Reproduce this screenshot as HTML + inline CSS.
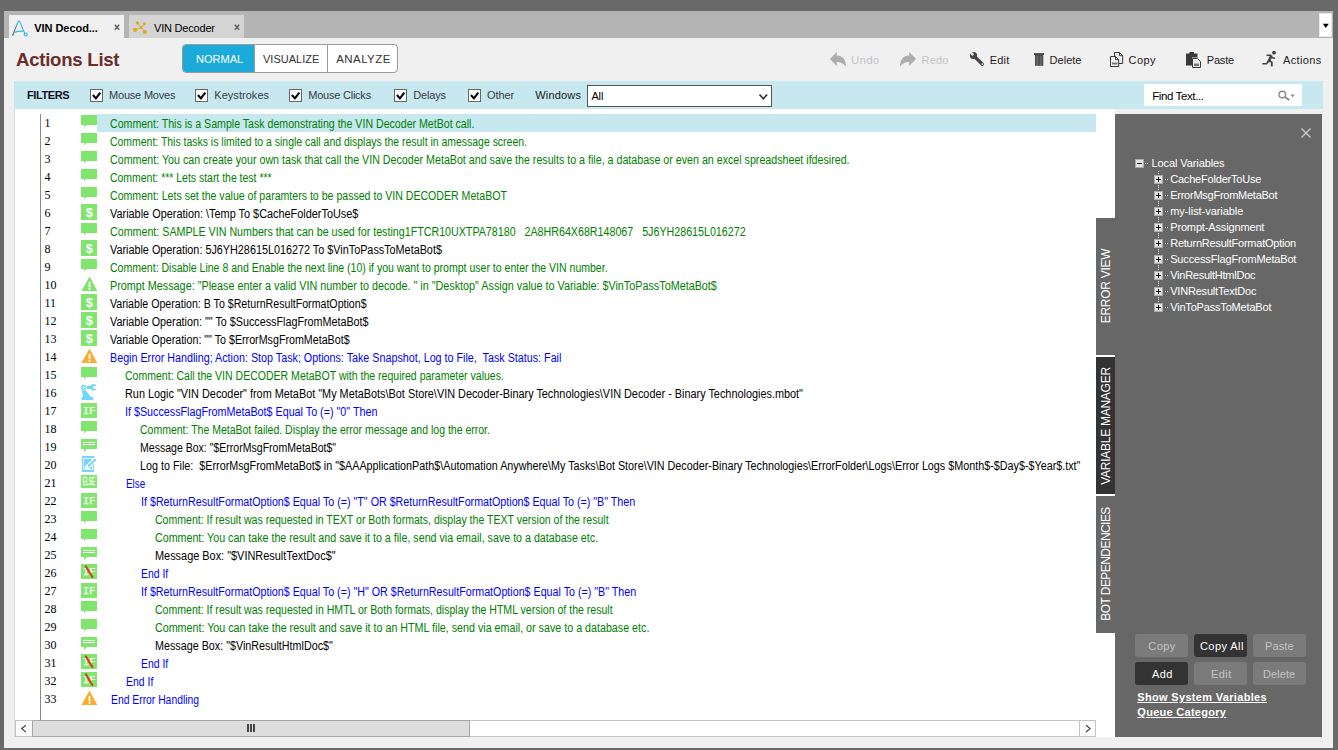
<!DOCTYPE html>
<html><head><meta charset="utf-8"><title>VIN Decoder</title>
<style>
*{box-sizing:border-box;margin:0;padding:0}
html,body{width:1338px;height:750px;overflow:hidden;background:#696969;font-family:"Liberation Sans",sans-serif;}
#app{position:absolute;left:0;top:0;width:1338px;height:750px;background:#696969;overflow:hidden}
#app div,#app svg,#app span{position:absolute}
.x{white-space:pre;left:0;top:0}
.ic{left:81px}
.n{left:44.5px;font-family:"Liberation Serif",serif;font-size:12px;line-height:18px;color:#000;white-space:pre}
.cb{width:13px;height:13px;top:89px;background:#fff;border:1px solid #666}
.btn{height:23px;border-radius:3px}
.vt{writing-mode:vertical-rl}
</style></head><body><div id="app">

<div style="left:4px;top:11px;width:1329px;height:27px;background:#b4b4b4"></div>
<div style="left:4px;top:38px;width:1329px;height:710px;background:#f0f0f0"></div>
<div style="left:9px;top:15px;width:115px;height:23px;background:#f0f0f0"></div>
<div style="left:129px;top:15px;width:115px;height:23px;background:#d4d4d4"></div>
<svg style="left:11px;top:18px" width="18" height="20" viewBox="0 0 18 20"><linearGradient id="ag" x1="0" y1="1" x2="0" y2="0"><stop offset="0" stop-color="#4a4a4a"/><stop offset="0.550" stop-color="#4c86a8"/><stop offset="1" stop-color="#3ab4e8"/></linearGradient><path d="M1.600 17.600L6.900 4.100" stroke="url(#ag)" stroke-width="1.150" fill="none"/><path d="M6.900 4.100Q8 1.500 9.100 4.100L12.900 13.600L13.800 15.300" stroke="#3ab4e8" stroke-width="1.150" fill="none"/><path d="M3.500 14.400C6 13 9 13 12.400 13.100" stroke="#3ab4e8" stroke-width="1.200" fill="none"/><circle cx="14.750" cy="16.500" r="1.500" stroke="#3ab4e8" stroke-width="1.200" fill="none"/></svg>
<svg style="left:131px;top:19px" width="18" height="18" viewBox="0 0 18 18"><g stroke="#e2a722" stroke-width="1"><path d="M6.4 4.1L10.2 8.4M13.4 4.8L10.2 8.4M4.1 10.9L10.2 8.4M13.8 13L10.2 8.4"/></g><g fill="#e2a722"><rect x="4.900" y="2.600" width="3" height="3" rx="0.800"/><circle cx="13.400" cy="4.800" r="1.500"/><circle cx="4.100" cy="10.900" r="2.100"/><circle cx="13.800" cy="13" r="2.100"/><circle cx="10.200" cy="8.400" r="1.300"/></g></svg>
<svg style="left:112.8px;top:23px" width="8" height="8" viewBox="0 0 8 8"><path d="M1.800 1.700L6.200 6.700M6.200 1.700L1.800 6.700" stroke="#606060" stroke-width="1.500"/></svg>
<svg style="left:232.8px;top:23px" width="8" height="8" viewBox="0 0 8 8"><path d="M1.800 1.700L6.200 6.700M6.200 1.700L1.800 6.700" stroke="#606060" stroke-width="1.500"/></svg>
<div style="left:1319px;top:13px;width:13px;height:24px;background:#fff;border:1px solid #e8e8e8"></div>
<svg style="left:1322px;top:23px" width="8" height="6" viewBox="0 0 8 6"><path d="M0.8 0.8h6L3.8 5z" fill="#000"/></svg>
<div style="left:182px;top:44px;width:216px;height:29px;background:#fff;border:1px solid #9a9a9a;border-radius:4px;overflow:hidden"><div style="left:0;top:0;width:71px;height:27px;background:#1aabdb"></div><div style="left:71px;top:0;width:1px;height:27px;background:#9a9a9a"></div><div style="left:144px;top:0;width:1px;height:27px;background:#9a9a9a"></div></div>
<svg style="left:829px;top:51px" width="18" height="17" viewBox="0 0 18 17"><path d="M7.8 1L0.9 7.9L7.8 15V11C12 11 15 12.5 16.9 15.8C17.3 9 13.5 4.5 7.8 4.5Z" fill="#adadad"/></svg>
<svg style="left:899px;top:51px" width="18" height="17" viewBox="0 0 18 17"><path d="M10.2 1L17.1 7.9L10.2 15V11C6 11 3 12.5 1.100 15.800C0.700 9 4.500 4.500 10.200 4.500Z" fill="#adadad"/></svg>
<svg style="left:969px;top:51px" width="17" height="17" viewBox="0 0 17 17"><path d="M5.500 5.500L13.400 13.200" stroke="#454545" stroke-width="3.300" stroke-linecap="round"/><circle cx="4.500" cy="4.500" r="3.600" fill="#454545"/><rect x="-1.200" y="-5.200" width="2.400" height="4.800" transform="translate(4.500 4.500) rotate(-45)" fill="#f0f0f0"/><circle cx="13.400" cy="13.200" r="0.900" fill="#f0f0f0"/></svg>
<svg style="left:1033px;top:52px" width="12" height="15" viewBox="0 0 12 15"><path d="M1 1.100h10.100v1.900H1z" fill="#4a4a4a"/><path d="M2 3h8.300v10.800H2z" fill="#505050"/><path d="M4.300 4v9M7.900 4v9" stroke="#7c7c7c" stroke-width="0.900"/></svg>
<svg style="left:1109px;top:51px" width="16" height="17" viewBox="0 0 16 17"><path d="M5.500 1.500h5l3.200 3.200v7.800h-8.200z" fill="#f0f0f0" stroke="#3a3a3a" stroke-width="1"/><path d="M10.500 1.500v3.200h3.200" fill="none" stroke="#3a3a3a" stroke-width="1"/><path d="M1.500 5.500h5l3.200 3.200v6.800h-8.200z" fill="#f0f0f0" stroke="#3a3a3a" stroke-width="1"/><path d="M6.500 5.500v3.200h3.200" fill="none" stroke="#3a3a3a" stroke-width="1"/><path d="M3 11.500h5.500v2H3z" fill="#777"/></svg>
<svg style="left:1185px;top:51px" width="17" height="18" viewBox="0 0 17 18"><path d="M1 2.500h3.500v-1.500h4.500v1.500h3.500v4h-5.500v8h-6z" fill="#3a3a3a"/><path d="M7.500 7.500h5l3 3v6h-8z" fill="#f0f0f0" stroke="#3a3a3a" stroke-width="1"/><path d="M9 12.500h5v2.500h-5z" fill="#777"/></svg>
<svg style="left:1261px;top:50px" width="17" height="18" viewBox="0 0 17 18"><circle cx="13" cy="2.700" r="1.900" fill="#444"/><g fill="none" stroke="#444" stroke-linejoin="round"><path d="M5.500 5.300H10.300" stroke-width="1.600"/><path d="M10.600 5.300L7.200 12" stroke-width="2.600"/><path d="M7.300 11.500L5.600 13.800H1.300" stroke-width="1.600"/><path d="M8 10.300L10.800 12.300V16.600" stroke-width="1.800"/><path d="M10 7.600L14 8.300" stroke-width="1.500"/></g></svg>
<div style="left:14px;top:81px;width:1309px;height:28px;background:#c8e8f0"></div>
<div class="cb" style="left:90px"><svg style="left:0;top:0" width="11" height="11" viewBox="0 0 11 11"><path d="M1.900 5.100L4.900 8.400L9.300 2.600" fill="none" stroke="#0a0a0a" stroke-width="2.200"/></svg></div>
<div class="cb" style="left:195px"><svg style="left:0;top:0" width="11" height="11" viewBox="0 0 11 11"><path d="M1.900 5.100L4.900 8.400L9.300 2.600" fill="none" stroke="#0a0a0a" stroke-width="2.200"/></svg></div>
<div class="cb" style="left:289px"><svg style="left:0;top:0" width="11" height="11" viewBox="0 0 11 11"><path d="M1.900 5.100L4.900 8.400L9.300 2.600" fill="none" stroke="#0a0a0a" stroke-width="2.200"/></svg></div>
<div class="cb" style="left:394px"><svg style="left:0;top:0" width="11" height="11" viewBox="0 0 11 11"><path d="M1.900 5.100L4.900 8.400L9.300 2.600" fill="none" stroke="#0a0a0a" stroke-width="2.200"/></svg></div>
<div class="cb" style="left:468px"><svg style="left:0;top:0" width="11" height="11" viewBox="0 0 11 11"><path d="M1.900 5.100L4.900 8.400L9.300 2.600" fill="none" stroke="#0a0a0a" stroke-width="2.200"/></svg></div>
<div style="left:587px;top:85px;width:185px;height:22px;background:#fff;border:1px solid #555"></div>
<svg style="left:758px;top:93px" width="11" height="8" viewBox="0 0 11 8"><path d="M1.500 1.500L5.300 5.800L9.100 1.500" fill="none" stroke="#333" stroke-width="1.700"/></svg>
<div style="left:1144px;top:84px;width:158px;height:22px;background:#fff"></div>
<svg style="left:1277px;top:88px" width="20" height="14" viewBox="0 0 20 14"><circle cx="5.300" cy="6.500" r="3.300" fill="none" stroke="#8c8c8c" stroke-width="1.400"/><path d="M7.800 9L12.300 12" stroke="#8c8c8c" stroke-width="1.800"/><path d="M13.300 6.600h4.500l-2.250 2.600z" fill="#8c8c8c"/></svg>
<div style="left:14px;top:109px;width:1101px;height:628px;background:#fff;border-left:1px solid #ddd"></div>
<div style="left:40px;top:114px;width:1px;height:606px;background:#8a8a8a"></div>
<div style="left:97px;top:114px;width:999px;height:18px;background:#c8e8f0"></div>
<span class="n" style="top:114px">1</span>
<svg class="ic" style="top:114px" width="17" height="18" viewBox="0 0 17 18"><path d="M0 1h16v10H5.2L3 13.2V11H0z" fill="#80e56c"/></svg>
<span class="n" style="top:132px">2</span>
<svg class="ic" style="top:132px" width="17" height="18" viewBox="0 0 17 18"><path d="M0 1h16v10H5.2L3 13.2V11H0z" fill="#80e56c"/></svg>
<span class="n" style="top:150px">3</span>
<svg class="ic" style="top:150px" width="17" height="18" viewBox="0 0 17 18"><path d="M0 1h16v10H5.2L3 13.2V11H0z" fill="#80e56c"/></svg>
<span class="n" style="top:168px">4</span>
<svg class="ic" style="top:168px" width="17" height="18" viewBox="0 0 17 18"><path d="M0 1h16v10H5.2L3 13.2V11H0z" fill="#80e56c"/></svg>
<span class="n" style="top:186px">5</span>
<svg class="ic" style="top:186px" width="17" height="18" viewBox="0 0 17 18"><path d="M0 1h16v10H5.2L3 13.2V11H0z" fill="#80e56c"/></svg>
<span class="n" style="top:204px">6</span>
<svg class="ic" style="top:204px" width="17" height="18" viewBox="0 0 17 18"><rect x="0" y="0" width="16" height="16" fill="#80e56c"/><text x="8.400" y="12.700" font-family="Liberation Sans,sans-serif" font-size="13" font-weight="bold" fill="#fff" text-anchor="middle">$</text></svg>
<span class="n" style="top:222px">7</span>
<svg class="ic" style="top:222px" width="17" height="18" viewBox="0 0 17 18"><path d="M0 1h16v10H5.2L3 13.2V11H0z" fill="#80e56c"/></svg>
<span class="n" style="top:240px">8</span>
<svg class="ic" style="top:240px" width="17" height="18" viewBox="0 0 17 18"><rect x="0" y="0" width="16" height="16" fill="#80e56c"/><text x="8.400" y="12.700" font-family="Liberation Sans,sans-serif" font-size="13" font-weight="bold" fill="#fff" text-anchor="middle">$</text></svg>
<span class="n" style="top:258px">9</span>
<svg class="ic" style="top:258px" width="17" height="18" viewBox="0 0 17 18"><path d="M0 1h16v10H5.2L3 13.2V11H0z" fill="#80e56c"/></svg>
<span class="n" style="top:276px">10</span>
<svg class="ic" style="top:276px" width="17" height="18" viewBox="0 0 17 18"><path d="M8.5 0.6L16.3 15H0.4z" fill="#80e56c"/><path d="M7.6 6h1.8v5.2H7.6zM7.6 12h1.8v1.8H7.6z" fill="#fff"/></svg>
<span class="n" style="top:294px">11</span>
<svg class="ic" style="top:294px" width="17" height="18" viewBox="0 0 17 18"><rect x="0" y="0" width="16" height="16" fill="#80e56c"/><text x="8.400" y="12.700" font-family="Liberation Sans,sans-serif" font-size="13" font-weight="bold" fill="#fff" text-anchor="middle">$</text></svg>
<span class="n" style="top:312px">12</span>
<svg class="ic" style="top:312px" width="17" height="18" viewBox="0 0 17 18"><rect x="0" y="0" width="16" height="16" fill="#80e56c"/><text x="8.400" y="12.700" font-family="Liberation Sans,sans-serif" font-size="13" font-weight="bold" fill="#fff" text-anchor="middle">$</text></svg>
<span class="n" style="top:330px">13</span>
<svg class="ic" style="top:330px" width="17" height="18" viewBox="0 0 17 18"><rect x="0" y="0" width="16" height="16" fill="#80e56c"/><text x="8.400" y="12.700" font-family="Liberation Sans,sans-serif" font-size="13" font-weight="bold" fill="#fff" text-anchor="middle">$</text></svg>
<span class="n" style="top:348px">14</span>
<svg class="ic" style="top:348px" width="17" height="18" viewBox="0 0 17 18"><path d="M8.5 0.6L16.3 15H0.4z" fill="#f9ae31"/><path d="M7.6 6h1.8v5.2H7.6zM7.6 12h1.8v1.8H7.6z" fill="#fff"/></svg>
<span class="n" style="top:366px">15</span>
<svg class="ic" style="top:366px" width="17" height="18" viewBox="0 0 17 18"><path d="M0 1h16v10H5.2L3 13.2V11H0z" fill="#80e56c"/></svg>
<span class="n" style="top:384px">16</span>
<svg class="ic" style="top:384px" width="17" height="18" viewBox="0 0 17 18"><g fill="#74d5fb"><path d="M2.5 0.700a2.700 2.700 0 1 0 0.010 0zM2.500 2.500a0.950 0.950 0 1 1 -0.010 0z" fill-rule="evenodd"/><rect x="6" y="1.6" width="5" height="3.4"/><path d="M10.5 0.3h3.6l1 0.8v0.9h-2.2l-0.7 0.9v1l0.7 0.9h2.2v0.9l-1 0.8h-3.6z"/><path d="M0.900 6.300h3.900l5.300 6.900H2z"/><rect x="0.6" y="13" width="11.6" height="3"/></g></svg>
<span class="n" style="top:402px">17</span>
<svg class="ic" style="top:402px" width="17" height="18" viewBox="0 0 17 18"><rect x="0" y="1" width="16" height="15" fill="#80e56c"/><text x="8.2" y="12" font-family="Liberation Mono,monospace" font-size="10.200" fill="#fff" stroke="#fff" stroke-width="0.250" text-anchor="middle">IF</text></svg>
<span class="n" style="top:420px">18</span>
<svg class="ic" style="top:420px" width="17" height="18" viewBox="0 0 17 18"><path d="M0 1h16v10H5.2L3 13.2V11H0z" fill="#80e56c"/></svg>
<span class="n" style="top:438px">19</span>
<svg class="ic" style="top:438px" width="17" height="18" viewBox="0 0 17 18"><path d="M0 1h16v10H6L3 14V11H0z" fill="#80e56c"/><path d="M2 4h12v1H2zM2 6h12v1H2z" fill="#fff"/></svg>
<span class="n" style="top:456px">20</span>
<svg class="ic" style="top:456px" width="17" height="18" viewBox="0 0 17 18"><rect x="1" y="0" width="12" height="16" fill="#74d5fb"/><rect x="2.300" y="2" width="9.700" height="11.800" fill="#fff"/><rect x="3" y="3" width="8" height="9.800" fill="#74d5fb"/><path d="M4.700 12.600L14.300 3.600" stroke="#fff" stroke-width="4.200"/><path d="M7 10.500L14.700 3.300" stroke="#74d5fb" stroke-width="2"/></svg>
<span class="n" style="top:474px">21</span>
<svg class="ic" style="top:474px" width="17" height="18" viewBox="0 0 17 18"><rect x="0" y="1" width="16" height="13" fill="#80e56c"/><text x="8" y="11.200" font-family="Liberation Sans,sans-serif" font-size="10" fill="#fff" stroke="#fff" stroke-width="0.350" text-anchor="middle" textLength="12.300" lengthAdjust="spacingAndGlyphs">ELSE</text></svg>
<span class="n" style="top:492px">22</span>
<svg class="ic" style="top:492px" width="17" height="18" viewBox="0 0 17 18"><rect x="0" y="1" width="16" height="15" fill="#80e56c"/><text x="8.2" y="12" font-family="Liberation Mono,monospace" font-size="10.200" fill="#fff" stroke="#fff" stroke-width="0.250" text-anchor="middle">IF</text></svg>
<span class="n" style="top:510px">23</span>
<svg class="ic" style="top:510px" width="17" height="18" viewBox="0 0 17 18"><path d="M0 1h16v10H5.2L3 13.2V11H0z" fill="#80e56c"/></svg>
<span class="n" style="top:528px">24</span>
<svg class="ic" style="top:528px" width="17" height="18" viewBox="0 0 17 18"><path d="M0 1h16v10H5.2L3 13.2V11H0z" fill="#80e56c"/></svg>
<span class="n" style="top:546px">25</span>
<svg class="ic" style="top:546px" width="17" height="18" viewBox="0 0 17 18"><path d="M0 1h16v10H6L3 14V11H0z" fill="#80e56c"/><path d="M2 4h12v1H2zM2 6h12v1H2z" fill="#fff"/></svg>
<span class="n" style="top:564px">26</span>
<svg class="ic" style="top:564px" width="17" height="18" viewBox="0 0 17 18"><rect x="0" y="0" width="16" height="15" fill="#80e56c"/><text x="8.2" y="11" font-family="Liberation Mono,monospace" font-size="10.200" fill="#fff" stroke="#fff" stroke-width="0.250" text-anchor="middle">IF</text><path d="M4.800 2.400L11.400 13" stroke="#e0351a" stroke-width="2" stroke-linecap="round"/></svg>
<span class="n" style="top:582px">27</span>
<svg class="ic" style="top:582px" width="17" height="18" viewBox="0 0 17 18"><rect x="0" y="1" width="16" height="15" fill="#80e56c"/><text x="8.2" y="12" font-family="Liberation Mono,monospace" font-size="10.200" fill="#fff" stroke="#fff" stroke-width="0.250" text-anchor="middle">IF</text></svg>
<span class="n" style="top:600px">28</span>
<svg class="ic" style="top:600px" width="17" height="18" viewBox="0 0 17 18"><path d="M0 1h16v10H5.2L3 13.2V11H0z" fill="#80e56c"/></svg>
<span class="n" style="top:618px">29</span>
<svg class="ic" style="top:618px" width="17" height="18" viewBox="0 0 17 18"><path d="M0 1h16v10H5.2L3 13.2V11H0z" fill="#80e56c"/></svg>
<span class="n" style="top:636px">30</span>
<svg class="ic" style="top:636px" width="17" height="18" viewBox="0 0 17 18"><path d="M0 1h16v10H6L3 14V11H0z" fill="#80e56c"/><path d="M2 4h12v1H2zM2 6h12v1H2z" fill="#fff"/></svg>
<span class="n" style="top:654px">31</span>
<svg class="ic" style="top:654px" width="17" height="18" viewBox="0 0 17 18"><rect x="0" y="0" width="16" height="15" fill="#80e56c"/><text x="8.2" y="11" font-family="Liberation Mono,monospace" font-size="10.200" fill="#fff" stroke="#fff" stroke-width="0.250" text-anchor="middle">IF</text><path d="M4.800 2.400L11.400 13" stroke="#e0351a" stroke-width="2" stroke-linecap="round"/></svg>
<span class="n" style="top:672px">32</span>
<svg class="ic" style="top:672px" width="17" height="18" viewBox="0 0 17 18"><rect x="0" y="0" width="16" height="15" fill="#80e56c"/><text x="8.2" y="11" font-family="Liberation Mono,monospace" font-size="10.200" fill="#fff" stroke="#fff" stroke-width="0.250" text-anchor="middle">IF</text><path d="M4.800 2.400L11.400 13" stroke="#e0351a" stroke-width="2" stroke-linecap="round"/></svg>
<span class="n" style="top:690px">33</span>
<svg class="ic" style="top:690px" width="17" height="18" viewBox="0 0 17 18"><path d="M8.5 0.6L16.3 15H0.4z" fill="#f9ae31"/><path d="M7.6 6h1.8v5.2H7.6zM7.6 12h1.8v1.8H7.6z" fill="#fff"/></svg>
<div style="left:15px;top:720px;width:1081px;height:17px;background:#fff;border-top:1px solid #c4c4c4;border-bottom:1px solid #c4c4c4"></div>
<div style="left:32px;top:720px;width:438px;height:17px;background:#dddddd;border:1px solid #a6a6a6"></div>
<div style="left:15px;top:720px;width:1px;height:17px;background:#c4c4c4"></div>
<div style="left:1079px;top:720px;width:17px;height:17px;border:1px solid #c4c4c4"></div>
<svg style="left:20px;top:723px" width="8" height="11" viewBox="0 0 8 11"><path d="M5.800 2.300L1.700 5.600L5.800 9" fill="none" stroke="#444" stroke-width="1.200"/></svg>
<svg style="left:1084px;top:723px" width="8" height="11" viewBox="0 0 8 11"><path d="M2 2.300L6.100 5.600L2 9" fill="none" stroke="#444" stroke-width="1.200"/></svg>
<div style="left:247px;top:724px;width:2px;height:8px;background:#444"></div><div style="left:250px;top:724px;width:2px;height:8px;background:#444"></div><div style="left:253px;top:724px;width:2px;height:8px;background:#444"></div>
<div style="left:1115px;top:114px;width:207px;height:623px;background:#676767"></div>
<div style="left:1096px;top:218px;width:19px;height:137px;background:#676767"></div>
<div style="left:1096px;top:355px;width:19px;height:141px;background:#fff"></div>
<div style="left:1096px;top:357px;width:19px;height:137px;background:#333"></div>
<div style="left:1096px;top:496px;width:19px;height:137px;background:#676767"></div>
<svg style="left:1300px;top:127px" width="12" height="12" viewBox="0 0 12 12"><path d="M1.500 1.500L10.500 10.500M10.500 1.500L1.500 10.500" stroke="#ccc" stroke-width="1.300"/></svg>
<svg style="left:1134px;top:158px" width="36" height="162" viewBox="1134 158 36 162"><path d="M1145 163h1v1h-1zM1147 163h1v1h-1zM1158 171h1v1h-1zM1158 173h1v1h-1zM1165 179h1v1h-1zM1167 179h1v1h-1zM1158 185h1v1h-1zM1158 187h1v1h-1zM1158 189h1v1h-1zM1165 195h1v1h-1zM1167 195h1v1h-1zM1158 201h1v1h-1zM1158 203h1v1h-1zM1158 205h1v1h-1zM1165 211h1v1h-1zM1167 211h1v1h-1zM1158 217h1v1h-1zM1158 219h1v1h-1zM1158 221h1v1h-1zM1165 227h1v1h-1zM1167 227h1v1h-1zM1158 233h1v1h-1zM1158 235h1v1h-1zM1158 237h1v1h-1zM1165 243h1v1h-1zM1167 243h1v1h-1zM1158 249h1v1h-1zM1158 251h1v1h-1zM1158 253h1v1h-1zM1165 259h1v1h-1zM1167 259h1v1h-1zM1158 265h1v1h-1zM1158 267h1v1h-1zM1158 269h1v1h-1zM1165 275h1v1h-1zM1167 275h1v1h-1zM1158 281h1v1h-1zM1158 283h1v1h-1zM1158 285h1v1h-1zM1165 291h1v1h-1zM1167 291h1v1h-1zM1158 297h1v1h-1zM1158 299h1v1h-1zM1158 301h1v1h-1zM1165 307h1v1h-1zM1167 307h1v1h-1z" fill="#f4f4f4"/><rect x="1135.500" y="159.500" width="8" height="8" fill="#e2e2e2" stroke="#a8a8a8"/><path d="M1137 163.500h5" stroke="#111" stroke-width="1"/><rect x="1154.500" y="175.5" width="8" height="8" fill="#e2e2e2" stroke="#a8a8a8"/><path d="M1156 179.5h5M1158.500 177v5" stroke="#111" stroke-width="1"/><rect x="1154.500" y="191.5" width="8" height="8" fill="#e2e2e2" stroke="#a8a8a8"/><path d="M1156 195.5h5M1158.500 193v5" stroke="#111" stroke-width="1"/><rect x="1154.500" y="207.5" width="8" height="8" fill="#e2e2e2" stroke="#a8a8a8"/><path d="M1156 211.5h5M1158.500 209v5" stroke="#111" stroke-width="1"/><rect x="1154.500" y="223.5" width="8" height="8" fill="#e2e2e2" stroke="#a8a8a8"/><path d="M1156 227.5h5M1158.500 225v5" stroke="#111" stroke-width="1"/><rect x="1154.500" y="239.5" width="8" height="8" fill="#e2e2e2" stroke="#a8a8a8"/><path d="M1156 243.5h5M1158.500 241v5" stroke="#111" stroke-width="1"/><rect x="1154.500" y="255.5" width="8" height="8" fill="#e2e2e2" stroke="#a8a8a8"/><path d="M1156 259.5h5M1158.500 257v5" stroke="#111" stroke-width="1"/><rect x="1154.500" y="271.5" width="8" height="8" fill="#e2e2e2" stroke="#a8a8a8"/><path d="M1156 275.5h5M1158.500 273v5" stroke="#111" stroke-width="1"/><rect x="1154.500" y="287.5" width="8" height="8" fill="#e2e2e2" stroke="#a8a8a8"/><path d="M1156 291.5h5M1158.500 289v5" stroke="#111" stroke-width="1"/><rect x="1154.500" y="303.5" width="8" height="8" fill="#e2e2e2" stroke="#a8a8a8"/><path d="M1156 307.5h5M1158.500 305v5" stroke="#111" stroke-width="1"/></svg>
<div class="btn" style="left:1135px;top:634px;width:53px;background:#7b7b7b"></div>
<div class="btn" style="left:1194px;top:634px;width:53px;background:#333"></div>
<div class="btn" style="left:1253px;top:634px;width:53px;background:#7b7b7b"></div>
<div class="btn" style="left:1135px;top:662px;width:53px;background:#333"></div>
<div class="btn" style="left:1194px;top:662px;width:53px;background:#7b7b7b"></div>
<div class="btn" style="left:1253px;top:662px;width:53px;background:#7b7b7b"></div>
<div id="vt286" style="left:1005.5999999999999px;top:278px;width:200px;height:16px;line-height:16px;text-align:center;font-size:12px;color:#fff;white-space:pre;transform:rotate(-90deg)"><span style="position:static;display:inline-block;letter-spacing:-0.274px" id="vts286">ERROR VIEW</span></div>
<div id="vt426" style="left:1005.5999999999999px;top:418px;width:200px;height:16px;line-height:16px;text-align:center;font-size:12px;color:#fff;white-space:pre;transform:rotate(-90deg)"><span style="position:static;display:inline-block;letter-spacing:-0.263px" id="vts426">VARIABLE MANAGER</span></div>
<div id="vt564" style="left:1005.5999999999999px;top:556px;width:200px;height:16px;line-height:16px;text-align:center;font-size:12px;color:#fff;white-space:pre;transform:rotate(-90deg)"><span style="position:static;display:inline-block;letter-spacing:-0.555px" id="vts564">BOT DEPENDENCIES</span></div>
<span id="r1" class="x" style="left:109.9px;top:115px;font:normal 12px/18px 'Liberation Sans',sans-serif;color:#008000;transform-origin:0 0;transform:scaleX(0.8836)">Comment: This is a Sample Task demonstrating the VIN Decoder MetBot call.</span>
<span id="r2" class="x" style="left:109.9px;top:133px;font:normal 12px/18px 'Liberation Sans',sans-serif;color:#008000;transform-origin:0 0;transform:scaleX(0.8710)">Comment: This tasks is limited to a single call and displays the result in amessage screen.</span>
<span id="r3" class="x" style="left:109.9px;top:151px;font:normal 12px/18px 'Liberation Sans',sans-serif;color:#008000;transform-origin:0 0;transform:scaleX(0.8891)">Comment: You can create your own task that call the VIN Decoder MetaBot and save the results to a file, a database or even an excel spreadsheet ifdesired.</span>
<span id="r4" class="x" style="left:109.9px;top:169px;font:normal 12px/18px 'Liberation Sans',sans-serif;color:#008000;transform-origin:0 0;transform:scaleX(0.8715)">Comment: *** Lets start the test ***</span>
<span id="r5" class="x" style="left:109.9px;top:187px;font:normal 12px/18px 'Liberation Sans',sans-serif;color:#008000;transform-origin:0 0;transform:scaleX(0.8816)">Comment: Lets set the value of paramters to be passed to VIN DECODER MetaBOT</span>
<span id="r6" class="x" style="left:109.9px;top:205px;font:normal 12px/18px 'Liberation Sans',sans-serif;color:#000000;transform-origin:0 0;transform:scaleX(0.9076)">Variable Operation: \Temp To $CacheFolderToUse$</span>
<span id="r7" class="x" style="left:109.9px;top:223px;font:normal 12px/18px 'Liberation Sans',sans-serif;color:#008000;transform-origin:0 0;transform:scaleX(0.8908)">Comment: SAMPLE VIN Numbers that can be used for testing1FTCR10UXTPA78180   2A8HR64X68R148067   5J6YH28615L016272</span>
<span id="r8" class="x" style="left:109.9px;top:241px;font:normal 12px/18px 'Liberation Sans',sans-serif;color:#000000;transform-origin:0 0;transform:scaleX(0.9013)">Variable Operation: 5J6YH28615L016272 To $VinToPassToMetaBot$</span>
<span id="r9" class="x" style="left:109.9px;top:259px;font:normal 12px/18px 'Liberation Sans',sans-serif;color:#008000;transform-origin:0 0;transform:scaleX(0.8776)">Comment: Disable Line 8 and Enable the next line (10) if you want to prompt user to enter the VIN number.</span>
<span id="r10" class="x" style="left:109.9px;top:277px;font:normal 12px/18px 'Liberation Sans',sans-serif;color:#008000;transform-origin:0 0;transform:scaleX(0.9000)">Prompt Message: "Please enter a valid VIN number to decode. " in "Desktop" Assign value to Variable: $VinToPassToMetaBot$</span>
<span id="r11" class="x" style="left:109.9px;top:295px;font:normal 12px/18px 'Liberation Sans',sans-serif;color:#000000;transform-origin:0 0;transform:scaleX(0.8857)">Variable Operation: B To $ReturnResultFormatOption$</span>
<span id="r12" class="x" style="left:109.9px;top:313px;font:normal 12px/18px 'Liberation Sans',sans-serif;color:#000000;transform-origin:0 0;transform:scaleX(0.8972)">Variable Operation: "" To $SuccessFlagFromMetaBot$</span>
<span id="r13" class="x" style="left:109.9px;top:331px;font:normal 12px/18px 'Liberation Sans',sans-serif;color:#000000;transform-origin:0 0;transform:scaleX(0.8912)">Variable Operation: "" To $ErrorMsgFromMetaBot$</span>
<span id="r14" class="x" style="left:110.4px;top:349px;font:normal 12px/18px 'Liberation Sans',sans-serif;color:#0000ff;transform-origin:0 0;transform:scaleX(0.8951)">Begin Error Handling; Action: Stop Task; Options: Take Snapshot, Log to File,  Task Status: Fail</span>
<span id="r15" class="x" style="left:124.9px;top:367px;font:normal 12px/18px 'Liberation Sans',sans-serif;color:#008000;transform-origin:0 0;transform:scaleX(0.8772)">Comment: Call the VIN DECODER MetaBOT with the required parameter values.</span>
<span id="r16" class="x" style="left:125.4px;top:385px;font:normal 12px/18px 'Liberation Sans',sans-serif;color:#000000;transform-origin:0 0;transform:scaleX(0.9060)">Run Logic "VIN Decoder" from MetaBot "My MetaBots\Bot Store\VIN Decoder-Binary Technologies\VIN Decoder - Binary Technologies.mbot"</span>
<span id="r17" class="x" style="left:125.4px;top:403px;font:normal 12px/18px 'Liberation Sans',sans-serif;color:#0000ff;transform-origin:0 0;transform:scaleX(0.8954)">If $SuccessFlagFromMetaBot$ Equal To (=) "0" Then</span>
<span id="r18" class="x" style="left:139.9px;top:421px;font:normal 12px/18px 'Liberation Sans',sans-serif;color:#008000;transform-origin:0 0;transform:scaleX(0.8748)">Comment: The MetaBot failed. Display the error message and log the error.</span>
<span id="r19" class="x" style="left:140.4px;top:439px;font:normal 12px/18px 'Liberation Sans',sans-serif;color:#000000;transform-origin:0 0;transform:scaleX(0.8783)">Message Box: "$ErrorMsgFromMetaBot$"</span>
<span id="r20" class="x" style="left:140.4px;top:457px;font:normal 12px/18px 'Liberation Sans',sans-serif;color:#000000;transform-origin:0 0;transform:scaleX(0.8978)">Log to File:  $ErrorMsgFromMetaBot$ in "$AAApplicationPath$\Automation Anywhere\My Tasks\Bot Store\VIN Decoder-Binary Technologies\ErrorFolder\Logs\Error Logs $Month$-$Day$-$Year$.txt"</span>
<span id="r21" class="x" style="left:125.60000000000001px;top:475px;font:normal 12px/18px 'Liberation Sans',sans-serif;color:#0000ff;transform-origin:0 0;transform:scaleX(0.8225)">Else</span>
<span id="r22" class="x" style="left:140.6px;top:493px;font:normal 12px/18px 'Liberation Sans',sans-serif;color:#0000ff;transform-origin:0 0;transform:scaleX(0.8921)">If $ReturnResultFormatOption$ Equal To (=) "T" OR $ReturnResultFormatOption$ Equal To (=) "B" Then</span>
<span id="r23" class="x" style="left:154.9px;top:511px;font:normal 12px/18px 'Liberation Sans',sans-serif;color:#008000;transform-origin:0 0;transform:scaleX(0.8779)">Comment: If result was requested in TEXT or Both formats, display the TEXT version of the result</span>
<span id="r24" class="x" style="left:154.9px;top:529px;font:normal 12px/18px 'Liberation Sans',sans-serif;color:#008000;transform-origin:0 0;transform:scaleX(0.8904)">Comment: You can take the result and save it to a file, send via email, save to a database etc.</span>
<span id="r25" class="x" style="left:155.4px;top:547px;font:normal 12px/18px 'Liberation Sans',sans-serif;color:#000000;transform-origin:0 0;transform:scaleX(0.9093)">Message Box: "$VINResultTextDoc$"</span>
<span id="r26" class="x" style="left:140.6px;top:565px;font:normal 12px/18px 'Liberation Sans',sans-serif;color:#0000ff;transform-origin:0 0;transform:scaleX(0.8674)">End If</span>
<span id="r27" class="x" style="left:140.6px;top:583px;font:normal 12px/18px 'Liberation Sans',sans-serif;color:#0000ff;transform-origin:0 0;transform:scaleX(0.8918)">If $ReturnResultFormatOption$ Equal To (=) "H" OR $ReturnResultFormatOption$ Equal To (=) "B" Then</span>
<span id="r28" class="x" style="left:154.9px;top:601px;font:normal 12px/18px 'Liberation Sans',sans-serif;color:#008000;transform-origin:0 0;transform:scaleX(0.8789)">Comment: If result was requested in HMTL or Both formats, display the HTML version of the result</span>
<span id="r29" class="x" style="left:154.9px;top:619px;font:normal 12px/18px 'Liberation Sans',sans-serif;color:#008000;transform-origin:0 0;transform:scaleX(0.8926)">Comment: You can take the result and save it to an HTML file, send via email, or save to a database etc.</span>
<span id="r30" class="x" style="left:155.4px;top:637px;font:normal 12px/18px 'Liberation Sans',sans-serif;color:#000000;transform-origin:0 0;transform:scaleX(0.8967)">Message Box: "$VinResultHtmlDoc$"</span>
<span id="r31" class="x" style="left:140.6px;top:655px;font:normal 12px/18px 'Liberation Sans',sans-serif;color:#0000ff;transform-origin:0 0;transform:scaleX(0.8674)">End If</span>
<span id="r32" class="x" style="left:125.5px;top:673px;font:normal 12px/18px 'Liberation Sans',sans-serif;color:#0000ff;transform-origin:0 0;transform:scaleX(0.8706)">End If</span>
<span id="r33" class="x" style="left:110.5px;top:691px;font:normal 12px/18px 'Liberation Sans',sans-serif;color:#0000ff;transform-origin:0 0;transform:scaleX(0.8622)">End Error Handling</span>
<span id="tab1" class="x" style="left:34.3px;top:17px;font:bold 11px/22px 'Liberation Sans',sans-serif;color:#000;letter-spacing:-0.057px;">VIN Decod...</span>
<span id="tab2" class="x" style="left:154px;top:17px;font:normal 11px/22px 'Liberation Sans',sans-serif;color:#000;letter-spacing:-0.199px;">VIN Decoder</span>
<span id="title" class="x" style="left:16px;top:47px;font:bold 18.6px/26px 'Liberation Sans',sans-serif;color:#6b2c2c;letter-spacing:-0.259px;">Actions List</span>
<span id="m1" class="x" style="left:196.1px;top:51px;font:normal 11px/16px 'Liberation Sans',sans-serif;color:#fff;letter-spacing:-0.010px;">NORMAL</span>
<span id="m2" class="x" style="left:263px;top:51px;font:normal 11px/16px 'Liberation Sans',sans-serif;color:#333;letter-spacing:0.006px;">VISUALIZE</span>
<span id="m3" class="x" style="left:336.2px;top:51px;font:normal 11.5px/16px 'Liberation Sans',sans-serif;color:#333;letter-spacing:0.434px;">ANALYZE</span>
<span id="tb1" class="x" style="left:851.2px;top:52px;font:normal 11px/16px 'Liberation Sans',sans-serif;color:#c6c0c6;letter-spacing:0.576px;">Undo</span>
<span id="tb2" class="x" style="left:921.6px;top:52px;font:normal 11px/16px 'Liberation Sans',sans-serif;color:#c6c0c6;letter-spacing:0.176px;">Redo</span>
<span id="tb3" class="x" style="left:989.7px;top:52px;font:normal 11px/16px 'Liberation Sans',sans-serif;color:#242026;letter-spacing:0.183px;">Edit</span>
<span id="tb4" class="x" style="left:1049.6px;top:52px;font:normal 11px/16px 'Liberation Sans',sans-serif;color:#242026;letter-spacing:0.017px;">Delete</span>
<span id="tb5" class="x" style="left:1128.5px;top:52px;font:normal 11px/16px 'Liberation Sans',sans-serif;color:#242026;letter-spacing:0.453px;">Copy</span>
<span id="tb6" class="x" style="left:1206.7px;top:52px;font:normal 11px/16px 'Liberation Sans',sans-serif;color:#242026;letter-spacing:-0.148px;">Paste</span>
<span id="tb7" class="x" style="left:1283px;top:52px;font:normal 11px/16px 'Liberation Sans',sans-serif;color:#242026;letter-spacing:0.360px;">Actions</span>
<span id="f0" class="x" style="left:27px;top:87px;font:bold 11px/16px 'Liberation Sans',sans-serif;color:#101020;letter-spacing:-0.388px;">FILTERS</span>
<span id="f1" class="x" style="left:109px;top:87px;font:normal 11px/16px 'Liberation Sans',sans-serif;color:#3a3a4a;letter-spacing:-0.199px;">Mouse Moves</span>
<span id="f2" class="x" style="left:214.3px;top:87px;font:normal 11px/16px 'Liberation Sans',sans-serif;color:#3a3a4a;letter-spacing:0.038px;">Keystrokes</span>
<span id="f3" class="x" style="left:308.3px;top:87px;font:normal 11px/16px 'Liberation Sans',sans-serif;color:#3a3a4a;letter-spacing:-0.234px;">Mouse Clicks</span>
<span id="f4" class="x" style="left:413.2px;top:87px;font:normal 11px/16px 'Liberation Sans',sans-serif;color:#3a3a4a;letter-spacing:-0.138px;">Delays</span>
<span id="f5" class="x" style="left:487.1px;top:87px;font:normal 11px/16px 'Liberation Sans',sans-serif;color:#3a3a4a;letter-spacing:-0.103px;">Other</span>
<span id="f6" class="x" style="left:535.2px;top:87px;font:normal 11px/16px 'Liberation Sans',sans-serif;color:#1a1a22;letter-spacing:0.182px;">Windows</span>
<span id="f7" class="x" style="left:591.4px;top:88px;font:normal 11px/16px 'Liberation Sans',sans-serif;color:#000;letter-spacing:-0.111px;">All</span>
<span id="f8" class="x" style="left:1152.2px;top:88px;font:normal 11.5px/16px 'Liberation Sans',sans-serif;color:#000;letter-spacing:-0.387px;">Find Text...</span>
<span id="v0" class="x" style="left:1151.5px;top:155px;font:normal 11px/16px 'Liberation Sans',sans-serif;color:#fff;letter-spacing:-0.094px;">Local Variables</span>
<span id="v1" class="x" style="left:1170.2px;top:171px;font:normal 11px/16px 'Liberation Sans',sans-serif;color:#fff;letter-spacing:-0.191px;">CacheFolderToUse</span>
<span id="v2" class="x" style="left:1170.2px;top:187px;font:normal 11px/16px 'Liberation Sans',sans-serif;color:#fff;letter-spacing:-0.250px;">ErrorMsgFromMetaBot</span>
<span id="v3" class="x" style="left:1170.2px;top:203px;font:normal 11px/16px 'Liberation Sans',sans-serif;color:#fff;letter-spacing:-0.054px;">my-list-variable</span>
<span id="v4" class="x" style="left:1170.2px;top:219px;font:normal 11px/16px 'Liberation Sans',sans-serif;color:#fff;letter-spacing:-0.147px;">Prompt-Assignment</span>
<span id="v5" class="x" style="left:1170.2px;top:235px;font:normal 11px/16px 'Liberation Sans',sans-serif;color:#fff;letter-spacing:-0.236px;">ReturnResultFormatOption</span>
<span id="v6" class="x" style="left:1170.2px;top:251px;font:normal 11px/16px 'Liberation Sans',sans-serif;color:#fff;letter-spacing:-0.160px;">SuccessFlagFromMetaBot</span>
<span id="v7" class="x" style="left:1170.2px;top:267px;font:normal 11px/16px 'Liberation Sans',sans-serif;color:#fff;letter-spacing:-0.248px;">VinResultHtmlDoc</span>
<span id="v8" class="x" style="left:1170.2px;top:283px;font:normal 11px/16px 'Liberation Sans',sans-serif;color:#fff;letter-spacing:-0.198px;">VINResultTextDoc</span>
<span id="v9" class="x" style="left:1170.2px;top:299px;font:normal 11px/16px 'Liberation Sans',sans-serif;color:#fff;letter-spacing:-0.181px;">VinToPassToMetaBot</span>
<span id="b1" class="x" style="left:1148.3px;top:638px;font:normal 11px/16px 'Liberation Sans',sans-serif;color:#c4c4c4;letter-spacing:0.428px;">Copy</span>
<span id="b2" class="x" style="left:1200px;top:638px;font:normal 11px/16px 'Liberation Sans',sans-serif;color:#fff;letter-spacing:0.430px;">Copy All</span>
<span id="b3" class="x" style="left:1265px;top:638px;font:normal 11px/16px 'Liberation Sans',sans-serif;color:#c4c4c4;letter-spacing:0.132px;">Paste</span>
<span id="b4" class="x" style="left:1152px;top:666px;font:normal 11px/16px 'Liberation Sans',sans-serif;color:#fff;letter-spacing:0.407px;">Add</span>
<span id="b5" class="x" style="left:1211px;top:666px;font:normal 11px/16px 'Liberation Sans',sans-serif;color:#c4c4c4;letter-spacing:0.458px;">Edit</span>
<span id="b6" class="x" style="left:1263px;top:666px;font:normal 11px/16px 'Liberation Sans',sans-serif;color:#c4c4c4;letter-spacing:0.084px;">Delete</span>
<span id="l1" class="x" style="left:1137.3px;top:689px;font:bold 11px/16px 'Liberation Sans',sans-serif;color:#fff;letter-spacing:0.324px;text-decoration:underline;">Show System Variables</span>
<span id="l2" class="x" style="left:1137.3px;top:704px;font:bold 11px/16px 'Liberation Sans',sans-serif;color:#fff;letter-spacing:0.281px;text-decoration:underline;">Queue Category</span>
</div></body></html>
